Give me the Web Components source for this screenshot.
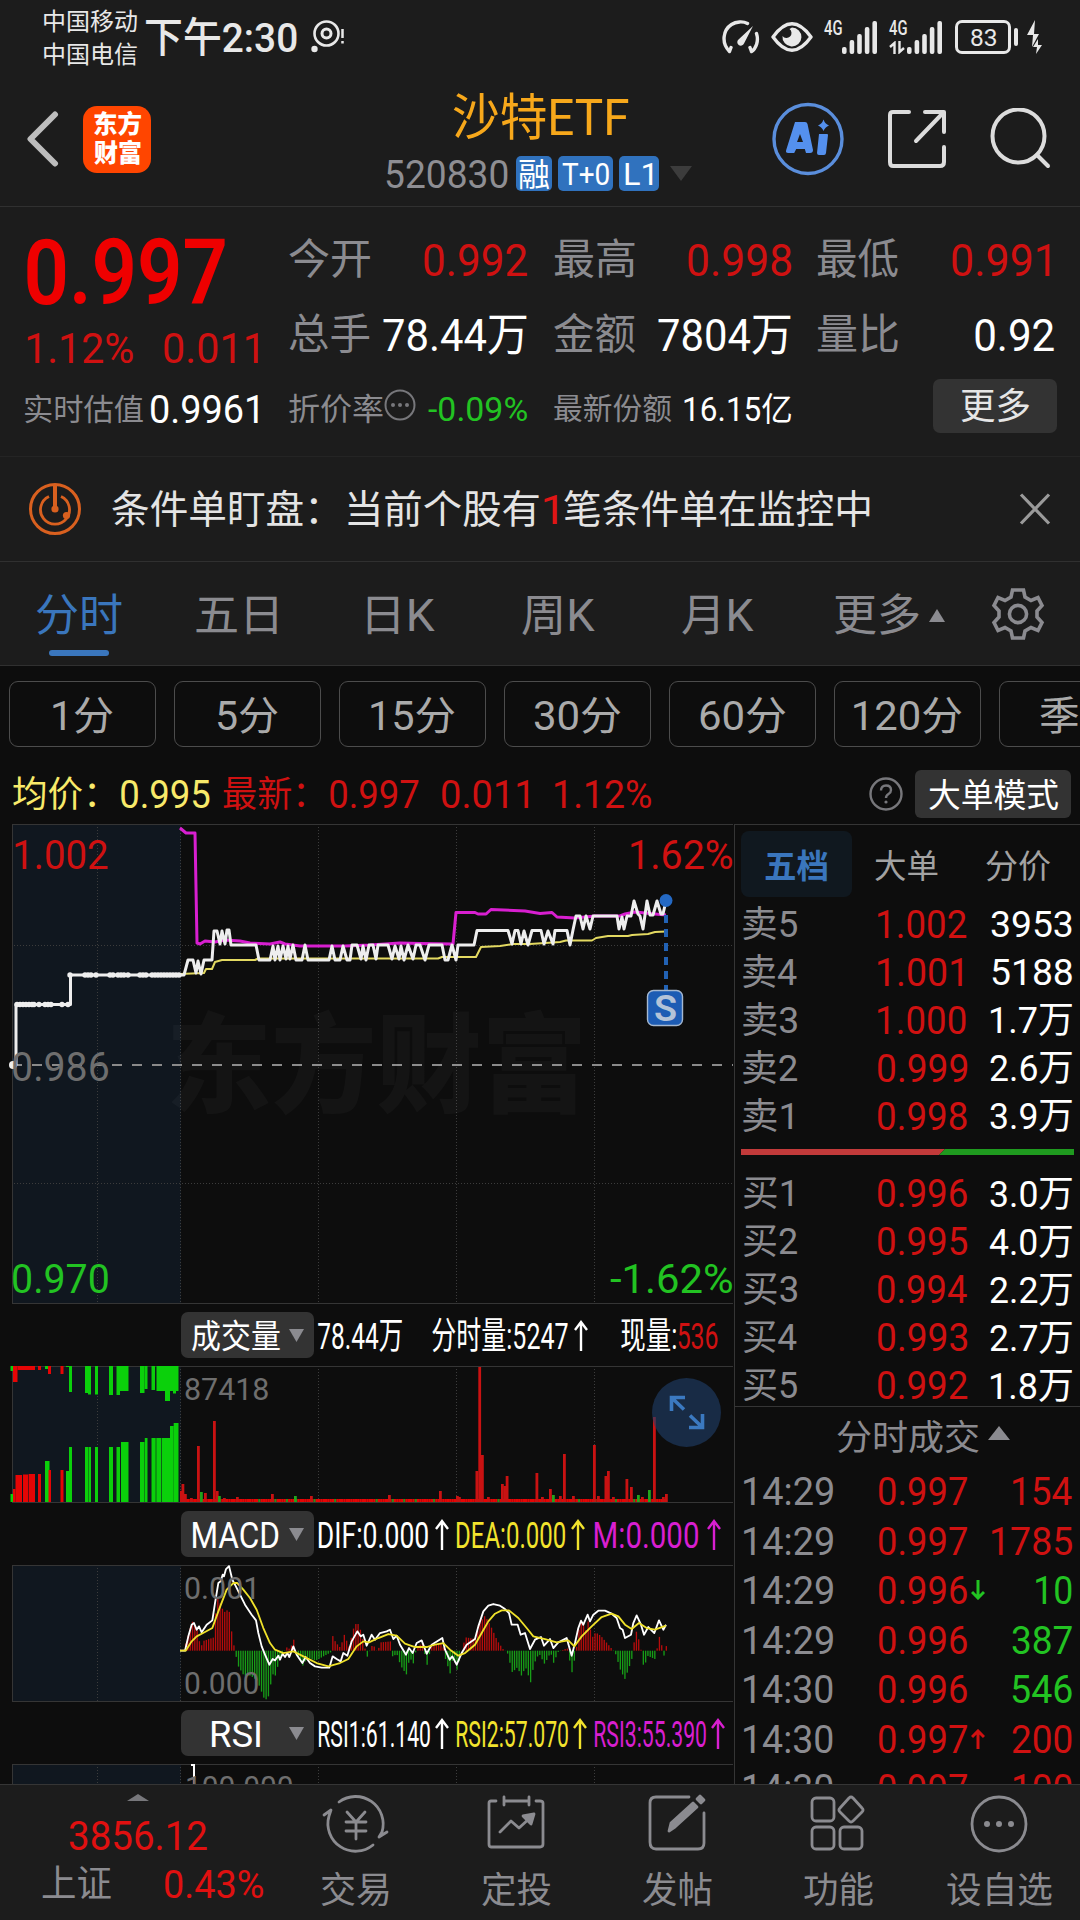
<!DOCTYPE html>
<html lang="zh-CN">
<head>
<meta charset="utf-8">
<title>沙特ETF 520830</title>
<style>
  html, body { margin: 0; background: #0d0d0d; }
</style>
</head>
<body>
<market-app></market-app>

<script>
const FONT = 'Roboto, "Noto Sans CJK SC", sans-serif';
const ctx = document.createElement("canvas").getContext("2d");

// Text whose ink fills exactly `w` pixels: <fit-text size="40" w="90">0.995</fit-text>
class FitText extends HTMLElement {
  constructor() {
    super();
    this.shadowDOM = this.attachShadow({ mode: "open" });
  }
  connectedCallback() {
    this.render();
  }

  render() {
    const size = this.getAttribute("size");
    const width = Number(this.getAttribute("w"));
    const weight = this.getAttribute("weight") || 400;
    const color = this.getAttribute("color") || "inherit";
    ctx.font = `${weight} ${size}px ${FONT}`;
    const box = ctx.measureText(this.textContent.trim());
    const ink = box.actualBoundingBoxLeft + box.actualBoundingBoxRight;
    const scale = width / ink;
    this.shadowDOM.innerHTML = `
    <style>
    :host {
        display: block;
        flex: none;
        width: ${width}px;
        height: ${size}px;
        font: ${weight} ${size}px/${size}px ${FONT};
        color: ${color};
    }
    span {
        display: block;
        width: max-content;
        white-space: nowrap;
        transform-origin: 0 50%;
        transform: translate(${box.actualBoundingBoxLeft * scale}px, 1px) scaleX(${scale});
    }
    </style><span><slot></slot></span>`;
  }
}
customElements.define("fit-text", FitText);

class View extends HTMLElement {
  constructor() {
    super();
    this.shadowDOM = this.attachShadow({ mode: "open" });
  }
  connectedCallback() {
    this.shadowDOM.innerHTML = `
    <style>
    :host { display: block; box-sizing: border-box; }
    * { box-sizing: border-box; }
    svg { display: block; flex: none; }
    ${this.styles()}
    </style>
    ${this.markup()}`;
  }
  styles() { return ""; }
  markup() { return ""; }
}

class StatusBar extends View {
  styles() {
    return `
    :host { display: flex; align-items: center; height: 74px; padding-left: 44px; color: #e8e8e8; }
    .carriers { display: flex; flex-direction: column; gap: 9px; }
    .signal { display: flex; }
    .battery { display: flex; align-items: center; justify-content: center; width: 56px; height: 34px; border: 3px solid #e8e8e8; border-radius: 7px; }
    .nub { width: 4px; height: 18px; border-radius: 2px; background: #e8e8e8; margin-left: 3px; }
    `;
  }
  bars() {
    return [[0, 7], [7.6, 14], [15.2, 20], [22.8, 27], [30.4, 33]]
      .map(([x, h]) => `<rect x="${x}" y="${33 - h}" width="4.6" height="${h}" rx="2"/>`).join("");
  }
  markup() {
    return `
    <div class="carriers">
      <fit-text size="24" w="93">中国移动</fit-text>
      <fit-text size="24" w="93">中国电信</fit-text>
    </div>
    <fit-text size="41" w="151" weight="500" style="margin-left:9px">下午2:30</fit-text>
    <svg width="36" height="36" viewBox="0 0 36 36" style="margin-left:13px" fill="none" stroke="#e8e8e8">
      <circle cx="16.500" cy="14.500" r="12" stroke-width="2.600"/><circle cx="16.500" cy="14.500" r="4.500" stroke-width="3"/>
      <circle cx="4.500" cy="30" r="3.200" fill="#e8e8e8" stroke="none"/>
      <path d="M32.500 10v9M32.500 22v2.500" stroke-width="2.500"/>
    </svg>
    <svg width="38" height="34" viewBox="0 0 38 34" style="margin-left:376px" fill="none" stroke="#e8e8e8" stroke-width="3.400" stroke-linecap="round">
      <path d="M7.500 31.500C-1 23 1 10 9.500 4.500C14 1.500 21 1 25.500 3.500M29.500 31.500C34 28.500 37 21 34.500 13.500M7.500 31.500l1.500-4M29.500 31.500l-1.500-4"/>
      <path d="M31 6L22 23.500A3.500 3.500 0 1 1 16.500 19.500Z" fill="#e8e8e8" stroke="none"/>
    </svg>
    <svg width="42" height="30" viewBox="0 0 42 30" style="margin-left:11px">
      <path d="M2 15Q21-11.500 40 15Q21 41.500 2 15Z" fill="none" stroke="#e8e8e8" stroke-width="3.400" stroke-linejoin="round"/>
      <path d="M21 5.500a9.500 9.500 0 1 1-9.500 8.500a5 5 0 1 0 7-7z" fill="#e8e8e8"/>
    </svg>
    <div class="signal" style="margin-left:11px">
      <fit-text size="20" w="18" weight="500" style="margin-top:-4px">4G</fit-text>
      <svg width="35" height="33" viewBox="0 0 35 33" fill="#e8e8e8">${this.bars()}</svg>
    </div>
    <div class="signal" style="margin-left:12px">
      <div>
        <fit-text size="20" w="18" weight="500" style="margin-top:-4px">4G</fit-text>
        <svg width="18" height="13" viewBox="0 0 18 13" fill="none" stroke="#e8e8e8" stroke-width="2.400" style="margin-top:4px"><path d="M1 6L5.500 2v11M10.500 0v11L15 7"/></svg>
      </div>
      <svg width="35" height="33" viewBox="0 0 35 33" fill="#e8e8e8">${this.bars()}</svg>
    </div>
    <div class="battery" style="margin-left:13px"><fit-text size="24" w="25">83</fit-text></div>
    <i class="nub"></i>
    <svg width="16" height="34" viewBox="0 0 16 34" style="margin-left:9px" fill="#e8e8e8">
      <path d="M8 0L0 15h6l-1 12 7-13H7zM11 19l-5 8h4l-1 7 6-9h-4z"/>
    </svg>`;
  }
}
customElements.define("status-bar", StatusBar);

class StockHeader extends View {
  styles() {
    return `
    :host { display: flex; align-items: center; height: 133px; padding-left: 27px; border-bottom: 1px solid #303030; }
    .logo { display: flex; flex-direction: column; align-items: center; gap: 4px; width: 68px; height: 67px; padding-top: 5px; margin: -2px 0 0 24px; border-radius: 14px; background: #ff4500; color: #fff; }
    .title { width: 306px; margin-left: 235px; padding-top: 3px; }
    .code { display: flex; align-items: center; height: 36px; margin-top: 14px; }
    .tag { display: flex; align-items: center; justify-content: center; height: 35px; border-radius: 5px; background: #3072be; color: #fff; margin-right: 6px; }
    `;
  }
  markup() {
    return `
    <svg width="32" height="56" viewBox="0 0 32 56" style="margin-top:-2px" fill="none" stroke="#bdbdbd" stroke-width="6" stroke-linecap="round" stroke-linejoin="round"><path d="M28 3.500L3.500 28L28 52.500"/></svg>
    <div class="logo">
      <fit-text size="25" w="47" weight="900">东方</fit-text>
      <fit-text size="25" w="47" weight="900">财富</fit-text>
    </div>
    <div class="title">
      <fit-text size="50" w="176" color="#f7a81b" style="margin-left:67px">沙特ETF</fit-text>
      <div class="code">
        <fit-text size="38" w="122" color="#8e8e93" style="margin-right:8px">520830</fit-text>
        <div class="tag" style="width:36px"><fit-text size="32" w="30">融</fit-text></div>
        <div class="tag" style="width:55px"><fit-text size="31" w="47">T+0</fit-text></div>
        <div class="tag" style="width:40px;margin-right:11px"><fit-text size="31" w="28">L1</fit-text></div>
        <svg width="22" height="15" viewBox="0 0 22 15"><path d="M0 0h22L11 15z" fill="#3c3c3c"/></svg>
      </div>
    </div>
    <svg width="72" height="74" viewBox="0 0 72 74" style="margin:-2px 0 0 80px">
      <ellipse cx="36" cy="37" rx="34" ry="34.500" fill="none" stroke="#5a8edc" stroke-width="3.400"/>
      <path d="M23 20h10q2 0 2.500 2l5.500 26q0 3-3 3h-4l-1.200-4h-8.600l-2 4h-6q-3 0-2-3zM28 32l-3 8h6z" fill="#5490ee" fill-rule="evenodd"/>
      <path d="M47 32h8q1 0 1 1l-2 18q-.3 2-2 2h-5q-2 0-2-2zM51.500 17.500q1.500 4.500 5.500 6q-4 1.500-5.500 5.500q-1.500-4-5.500-5.500q4-1.500 5.500-6z" fill="#5490ee"/>
    </svg>
    <svg width="58" height="60" viewBox="0 0 58 60" style="margin:-2px 0 0 44px" fill="none" stroke="#dcdcdc" stroke-width="4" stroke-linecap="round" stroke-linejoin="round">
      <path d="M21 3H5Q2 3 2 6V53Q2 57 5 57H52Q56 57 56 53V38M37 3H56V23M54 5L28 32"/>
    </svg>
    <svg width="62" height="62" viewBox="0 0 62 62" style="margin:-2px 0 0 44px" fill="none" stroke="#dcdcdc" stroke-width="4" stroke-linecap="round">
      <ellipse cx="28.500" cy="28" rx="26" ry="26.500"/><path d="M47 47L58 58"/>
    </svg>`;
  }
}
customElements.define("stock-header", StockHeader);

class QuotePanel extends View {
  styles() {
    return `
    :host { display: flex; height: 250px; border-bottom: 1px solid #242424; color: #fff; }
    .last { width: 289px; padding: 20px 0 0 27px; }
    .row { display: flex; align-items: center; }
    .grid { display: grid; grid-template-columns: 238px 237px 237px; grid-template-rows: 74px 76px 72px; column-gap: 26.500px; padding-top: 15px; }
    .cell { display: flex; align-items: center; justify-content: space-between; }
    .more { display: flex; align-items: center; justify-content: center; width: 124px; height: 54px; margin: -4px -3px 0 auto; border-radius: 7px; background: #333; color: #e6e6e6; }
    `;
  }
  cell(label, value, width, color = "inherit", pad = 0) {
    return `<div class="cell" style="padding-right:${pad}px">
      <fit-text size="42" w="81" color="#8b8b90">${label}</fit-text>
      <fit-text size="45" w="${width}" color="${color}">${value}</fit-text></div>`;
  }
  markup() {
    const red = "#cf1111";
    return `
    <div class="last">
      <div class="row" style="height:92px"><fit-text size="90" w="198" weight="600" color="#ef0000">0.997</fit-text></div>
      <div class="row" style="height:57px">
        <fit-text size="43" w="106" color="${red}">1.12%</fit-text>
        <fit-text size="43" w="94" color="${red}" style="margin-left:31px">0.011</fit-text>
      </div>
      <div class="row" style="height:66px;margin-left:-2px">
        <fit-text size="30" w="118" color="#8b8b90">实时估值</fit-text>
        <fit-text size="38" w="107" style="margin-left:8px">0.9961</fit-text>
      </div>
    </div>
    <div class="grid">
      ${this.cell("今开", "0.992", 103, red)}
      ${this.cell("最高", "0.998", 103, red)}
      ${this.cell("最低", "0.991", 98, red, 4)}
      ${this.cell("总手", "78.44万", 144)}
      ${this.cell("金额", "7804万", 133)}
      ${this.cell("量比", "0.92", 79)}
      <div class="row">
        <fit-text size="31" w="94" color="#8b8b90">折价率</fit-text>
        <svg width="32" height="32" viewBox="0 0 32 32" style="margin:-7px 0 0 1px" fill="#77777b">
          <circle cx="16" cy="16" r="14.500" fill="none" stroke="#77777b" stroke-width="2"/>
          <circle cx="9" cy="16" r="2"/><circle cx="16" cy="16" r="2"/><circle cx="23" cy="16" r="2"/>
        </svg>
        <fit-text size="33" w="99" color="#22c322" style="margin-left:12px">-0.09%</fit-text>
      </div>
      <div class="cell">
        <fit-text size="30" w="118" color="#8b8b90">最新份额</fit-text>
        <fit-text size="33" w="107">16.15亿</fit-text>
      </div>
      <div class="row"><div class="more"><fit-text size="36" w="68">更多</fit-text></div></div>
    </div>`;
  }
}
customElements.define("quote-panel", QuotePanel);

class NoticeBar extends View {
  styles() {
    return `:host { display: flex; align-items: center; height: 105px; padding-left: 28px; border-bottom: 1px solid #303030; color: #e4e4e4; }`;
  }
  markup() {
    return `
    <svg width="54" height="54" viewBox="0 0 54 54" fill="none" stroke="#d9601f" stroke-width="3">
      <circle cx="27" cy="27" r="24.500"/>
      <path d="M21 14.500A14.500 14.500 0 1 0 33 14.500" stroke-width="2.800"/><path d="M27 3V27" stroke-width="4"/>
      <circle cx="27" cy="27" r="3.600" fill="#d9601f" stroke="none"/><circle cx="38.500" cy="33.500" r="3.600" fill="#d9601f" stroke="none"/>
    </svg>
    <fit-text size="39" w="205" style="margin-left:30px">条件单盯盘：</fit-text>
    <fit-text size="39" w="191" style="margin-left:31px">当前个股有</fit-text>
    <fit-text size="41" w="13" color="#e01515" style="margin-left:5px">1</fit-text>
    <fit-text size="39" w="306" style="margin-left:7px">笔条件单在监控中</fit-text>
    <svg width="32" height="32" viewBox="0 0 32 32" style="margin-left:149px" stroke="#9a9a9a" stroke-width="3.200"><path d="M2 1.500L30 30.500M30 1.500L2 30.500"/></svg>`;
  }
}
customElements.define("notice-bar", NoticeBar);

class PeriodTabs extends View {
  styles() {
    return `
    :host { display: flex; align-items: center; height: 104px; padding: 3px 0 0 36px; border-bottom: 1px solid #303030; color: #8b8b90; }
    .active { position: relative; color: #3a76bd; }
    .active::after { content: ""; position: absolute; left: 13px; bottom: -19px; width: 60px; height: 6px; border-radius: 3px; background: #3a76bd; }
    `;
  }
  markup() {
    return `
    <div class="active"><fit-text size="44" w="86">分时</fit-text></div>
    <fit-text size="44" w="81" style="margin-left:74px">五日</fit-text>
    <fit-text size="44" w="68" style="margin-left:90px">日K</fit-text>
    <fit-text size="44" w="73" style="margin-left:87px">周K</fit-text>
    <fit-text size="44" w="72" style="margin-left:87px">月K</fit-text>
    <fit-text size="44" w="84" style="margin-left:81px">更多</fit-text>
    <svg width="16" height="13" viewBox="0 0 16 13" style="margin-left:10px"><path d="M8 0l8 13H0z" fill="#8b8b90"/></svg>
    <svg width="54" height="54" viewBox="-27 -27 54 54" style="margin:-3px 0 0 46px" fill="none" stroke="#8b8b90" stroke-width="3.600">
      <path d="M-5.500-24H5.500L7-17L13-13.500L20-16.500L24-8.500L19-3V3L24 8.500L20 16.500L13 13.500L7 17L5.500 24H-5.500L-7 17L-13 13.500L-20 16.500L-24 8.500L-19 3V-3L-24-8.500L-20-16.500L-13-13.500L-7-17Z"/>
      <circle r="8.600"/>
    </svg>`;
  }
}
customElements.define("period-tabs", PeriodTabs);

class MinuteChips extends View {
  styles() {
    return `
    :host { display: flex; gap: 18px; height: 88px; padding: 15px 0 0 9px; overflow: hidden; color: #aaa; }
    .chip { display: flex; flex: none; align-items: center; justify-content: center; width: 147px; height: 66px; padding-top: 3px; border: 1px solid #4c4c4c; border-radius: 9px; }
    `;
  }
  markup() {
    return [["1分", 60], ["5分", 60], ["15分", 84], ["30分", 87], ["60分", 86], ["120分", 108], ["季K", 66]]
      .map(([text, w]) => `<div class="chip"><fit-text size="40" w="${w}">${text}</fit-text></div>`).join("");
  }
}
customElements.define("minute-chips", MinuteChips);

class PriceLegend extends View {
  styles() {
    return `
    :host { display: flex; align-items: center; height: 71px; padding: 9px 9px 0 13px; color: #cf1111; }
    .mode { display: flex; align-items: center; justify-content: center; width: 156px; height: 48px; margin-left: 12px; border-radius: 6px; background: #333; color: #fff; }
    `;
  }
  markup() {
    return `
    <fit-text size="36" w="82" color="#f8e96a">均价：</fit-text>
    <fit-text size="39" w="89" color="#f8e96a" style="margin-left:26px">0.995</fit-text>
    <fit-text size="36" w="81" style="margin-left:13px">最新：</fit-text>
    <fit-text size="39" w="89" style="margin-left:26px">0.997</fit-text>
    <fit-text size="39" w="86" style="margin-left:23px">0.011</fit-text>
    <fit-text size="39" w="96" style="margin-left:27px">1.12%</fit-text>
    <svg width="34" height="34" viewBox="0 0 34 34" style="margin-left:auto" fill="none" stroke="#77777b" stroke-width="2.400">
      <circle cx="17" cy="17" r="15.500"/><path d="M12 13.500Q12 8.500 17 8.500T22 13Q22 15.500 19.500 17Q17 18.500 17 21"/><circle cx="17" cy="25" r="1.600" fill="#77777b" stroke="none"/>
    </svg>
    <div class="mode"><fit-text size="33" w="129">大单模式</fit-text></div>`;
  }
}
customElements.define("price-legend", PriceLegend);

// Dark frame with the pre-market block and the dotted time lines, shared by all chart panes
function frame(height) {
  return `
  <rect x="13" y="0" width="168" height="${height}" fill="#10171f"/>
  <path d="M97.500 0V${height}M180.500 0V${height}M318.500 0V${height}M456.500 0V${height}M594.500 0V${height}" stroke="#3c3c3c" stroke-dasharray="1 2"/>
  <path d="M12.500 0V${height}M12 .5H733M12 ${height - 0.5}H733" stroke="#353535" fill="none"/>`;
}

class TrendChart extends View {
  styles() {
    return `
    :host { position: relative; height: 480px; }
    fit-text { position: absolute; }
    `;
  }
  markup() {
    const dots = [17, 20, 23, 26, 29, 32, 34, 39, 45, 48, 51, 62, 68, 70, 85, 88, 91, 96, 110, 113, 118, 121, 124, 128, 140, 143, 146, 152, 155, 158, 161, 164, 167, 170, 173, 176, 179]
      .map(x => `<circle cx="${x}" cy="${x < 70 ? 180.5 : 151}" r="2.700"/>`).join("");
    return `
    <svg width="735" height="480" viewBox="0 0 735 480" fill="none">
      <rect x="13" y="0" width="168" height="480" fill="#10171f"/>
      <path d="M97.500 0V480M180.500 0V480M318.500 0V480M456.500 0V480M594.500 0V480M14 121.500H733M14 359.500H733" stroke="#3c3c3c" stroke-dasharray="1 2"/>
      <path d="M12.500 0V480M12 .5H733M12 479.500H733" stroke="#353535"/>
      <path d="M12 241H733" stroke="#8a8a8a" stroke-width="2" stroke-dasharray="10 10"/>
      <g transform="translate(0 -824)" stroke-linejoin="round">
        <path stroke="#e3d961" stroke-width="2" d="M180 974L204 973L206 969L212 969L215 962L222 960L255 960L258 958.500L438 958.500L442 957L476 957L481 947L500 946L514 944L530 944L560 942L566 940.500L592 940.500L596 938L608 936L628 936L632 935L648 934L655 932L666 931.500"/>
        <path stroke="#d81fd0" stroke-width="3" d="M180 828L186 833L195 833L197 943L200 944L205 941L215 942L225 940L240 941L250 943L270 944L280 942L285 944L300 946L345 946L370 945L400 943L420 943.500L453 944L456 912.500L475 912.500L478 914L486 914L491 909.500L525 911L540 913.500L552 912.500L557 917L575 918L595 916L620 916L625 914L635 912L655 914L666 915"/>
        <path stroke="#eee" stroke-width="3" d="M13 1065H16V1004.500H70.500V975H184L188 960H193L196 973L198 961L201 974L204 960H212L214 931H217L220 944L222 931L225 944L227 930H229L231 945H256L259 960H270L273 946L275 960L278 946L280 960L283 946L286 959L288 946L290 959L293 945L296 960H302L305 945L308 960H329L332 946L335 960H340L343 946L347 960H350L352 945H357L361 959L363 946L366 960L369 945H373L376 959L378 945H388L392 959L395 946L399 959L401 946L404 960L408 945L413 959L416 945H420L425 960L429 945H442L445 960H448L452 945L456 960L458 945H474L477 930.500H508L512 944L515 930.500H518L521 944L524 931L528 945L532 930.500H541L544 944L548 931L553 944L555 930.500H567L570 945L573 930L576 916H580L583 929L586 916L590 929L593 916H617L619 929L622 917L624 929L627 916H631L634 901L638 914L640 916L643 929L647 901L650 915H653L657 901L661 914H663L666 901"/>
      </g>
      <circle cx="13" cy="241" r="4" fill="#eee"/>
      <g fill="#eee">${dots}</g>
      <path d="M666 91V166" stroke="#2262b4" stroke-width="4" stroke-dasharray="8 6"/>
      <circle cx="666" cy="76.500" r="6.500" fill="#2469c4"/>
      <rect x="647.500" y="166.500" width="35" height="35" rx="6" fill="#1d5cb4" stroke="#a5b8d0" stroke-width="1.400"/>
    </svg>
    <fit-text size="108" w="409" weight="900" color="rgba(255,255,255,.03)" style="left:171px;top:188px">东方财富</fit-text>
    <fit-text size="36" w="21" weight="600" color="#b4c3d8" style="left:654.5px;top:166px">S</fit-text>
    <fit-text size="40.500" w="93" color="#cf1111" style="left:15px;top:10px">1.002</fit-text>
    <fit-text size="40.500" w="95" color="#6e6e6e" style="left:13px;top:222px">0.986</fit-text>
    <fit-text size="40.500" w="95" color="#22c322" style="left:13px;top:434px">0.970</fit-text>
    <fit-text size="40.500" w="101" color="#cf1111" style="left:631px;top:10px">1.62%</fit-text>
    <fit-text size="40.500" w="122" color="#22c322" style="left:610px;top:434px">-1.62%</fit-text>`;
  }
}
customElements.define("trend-chart", TrendChart);

// Indicator picker followed by its readings
class IndicatorRow extends View {
  styles() {
    return `
    :host { display: flex; align-items: center; height: 62px; padding-left: 181px; color: #fff; }
    .pick { display: flex; flex: none; align-items: center; justify-content: center; position: relative; width: 133px; height: 46px; padding-right: 24px; margin-right: 4px; border-radius: 7px; background: #333; }
    .pick svg { position: absolute; left: 108px; top: 17px; }
    `;
  }
  markup() {
    const [size, width] = this.getAttribute("box").split(" ");
    return `
    <div class="pick">
      <fit-text size="${size}" w="${width}">${this.getAttribute("name")}</fit-text>
      <svg width="15" height="13" viewBox="0 0 15 13"><path d="M0 0h15L7.500 13z" fill="#8b8b90"/></svg>
    </div>
    <slot></slot>`;
  }
}
customElements.define("indicator-row", IndicatorRow);

class UpArrow extends View {
  styles() { return `:host { flex: none; width: 14px; height: 32px; }`; }
  markup() {
    return `<svg width="14" height="32" viewBox="0 0 14 32" fill="none" stroke="currentColor" stroke-width="2.400"><path d="M7 32V3M1 11L7 3L13 11"/></svg>`;
  }
}
customElements.define("up-arrow", UpArrow);

class VolumeChart extends View {
  styles() {
    return `
    :host { position: relative; height: 137px; }
    fit-text { position: absolute; left: 185px; top: 7px; }
    .expand { position: absolute; left: 652px; top: 12px; }
    `;
  }
  bars() {
    const green = "#0bd00b", red = "#e60505";
    const rect = (x, w, y, h, c) => `<rect x="${x}" y="${y}" width="${w}" height="${h}" fill="${c}"/>`;
    let out = "";
    // auction: unmatched volume hangs from the top, matched volume stands on the bottom
    [[10.5, 13, 5, green], [13, 17.5, 16, red], [17.5, 35, 4, red], [38, 41, 4, red], [45, 48, 3, green], [48, 51, 8, red], [60.5, 63.5, 8, red],
     [66, 69, 1, green], [69, 72, 26, green], [85, 88, 27, green], [88, 91, 28.5, green], [95, 98, 28.5, green], [109, 113, 29, green], [116.5, 120, 29, green], [120, 128.5, 25, green],
     [140, 144.5, 27, green], [144.5, 147.5, 23, green], [151.5, 155, 24, green], [156.5, 165, 25, green], [165, 170, 35, green], [170, 173, 25, green], [173, 176, 27.5, green], [176, 178.5, 25, green]]
      .forEach(([a, b, h, c]) => { out += rect(a, b - a, 0, h, c); });
    [[10.5, 13, 8, green], [13, 15.5, 13, red], [15.5, 22, 27, red], [23, 28, 27.5, red], [28.6, 35, 28, red], [38, 41, 28, red], [45, 49.5, 41, green], [48.5, 51, 32, red], [60.5, 63.5, 32, red],
     [66, 69, 31, green], [69, 72, 55, green], [85, 88, 55, green], [88.4, 91, 55, green], [95, 98, 55, green], [109, 113, 55, green], [116.5, 120, 55, green], [121, 128.5, 60, green],
     [140, 144.5, 60, green], [144.8, 147.5, 64, green], [151.5, 155.7, 64, green], [156.3, 161, 64, green], [161.6, 170, 64, green], [170, 173.7, 76, green], [173.7, 178.5, 79, green]]
      .forEach(([a, b, h, c]) => { out += rect(a, b - a, 136 - h, h, c); });
    // minute volume
    const dark = "#c91212", dim = "#318a1a";
    for (let i = 0; i < 211; i++) {
      const x = 180 + i * 2.3;
      out += rect(x.toFixed(1), 2.4, 133, 3, [34, 41, 46, 50, 58, 67, 85, 92, 97, 102, 110, 130, 138].some(k => i % 139 === k) ? dim : red);
    }
    [[180, 11], [181.5, 18], [184, 8], [190, 4], [197, 56], [200, 10, 1], [204, 9], [213, 81], [215.8, 11], [218, 6, 1], [223, 4], [236, 5], [271, 8], [294, 6, 1], [310, 6],
     [388, 7], [439, 11], [456, 6], [458, 5], [475.5, 31], [478.3, 135], [481, 47], [487, 5], [501, 18], [503.5, 16], [505.7, 26], [535.5, 29], [541, 5], [549, 13], [552, 7, 1], [559, 6],
     [563, 48], [572, 6], [593, 57], [597, 6], [604.5, 26], [607, 31], [612, 5], [625.5, 23], [630, 15], [637, 7, 1], [641, 5], [648, 12, 1], [653, 85], [662, 5], [665, 8]]
      .forEach(([x, h, g]) => { out += rect(x, 2.8, 136 - h, h, g ? "#22a51c" : dark); });
    return out;
  }
  markup() {
    return `
    <svg width="735" height="137" viewBox="0 0 735 137">${frame(137)}${this.bars()}</svg>
    <fit-text size="31" w="83" color="#6e6e6e">87418</fit-text>
    <svg class="expand" width="70" height="70" viewBox="0 0 70 70" fill="none" stroke="#3b79c0" stroke-width="3.600">
      <circle cx="34.500" cy="34.500" r="34.500" fill="#20406b" fill-opacity=".6" stroke="none"/>
      <path d="M33 19.500H19.500V33M20 20L32 31.500M37 49.500H50.500V36M50 49L38 37.500"/>
    </svg>`;
  }
}
customElements.define("volume-chart", VolumeChart);

class MacdChart extends View {
  styles() {
    return `
    :host { position: relative; height: 137px; }
    fit-text { position: absolute; left: 185px; }
    `;
  }
  histogram() {
    const left = [[545, 0], [550, 5], [575, 88], [590, 60], [600, 10], [610, 30], [640, 40], [648, 165], [655, 150], [670, 115], [685, 125], [695, 40], [703, 0], [712, -45], [730, -75], [750, -75], [770, -90], [793, -150], [805, -135], [815, -70], [825, -75], [835, -30], [845, -12], [858, 10], [868, 5], [880, 35], [888, -10], [907, -45], [920, -20], [945, -30], [990, -5], [996, 45], [1005, 25], [1020, 8], [1030, 50], [1045, 12], [1062, 80], [1075, 80], [1090, 20], [1098, -15]];
    const right = [[8, -22], [15, 15], [28, 12], [35, -5], [45, 25], [75, 28], [82, -25], [92, -5], [105, -45], [123, -72], [132, -20], [143, -38], [152, 5], [170, 25], [185, -45], [195, 10], [230, 25], [238, -20], [254, -70], [262, -20], [275, -60], [290, 10], [300, 40], [330, 35], [343, 85], [358, 105], [375, 75], [395, 30], [412, 5], [425, -5], [440, -65], [455, -50], [467, -75], [480, -50], [495, -95], [505, -40], [520, -8], [537, -40], [555, -5], [565, -40], [575, -5], [605, 8], [619, -65], [630, -10], [640, 65], [648, 95], [660, 60], [668, 90], [680, 40], [690, 55], [705, 45], [735, 10], [750, -10], [765, -60], [778, -85], [792, -45], [800, -20], [806, 30], [813, 60], [825, 10], [835, -55], [845, -15], [868, -25], [882, 45], [895, -15], [903, 18]];
    const points = left.concat(right.map(([x, v]) => [x + 1095, v]));
    let out = "", k = 0;
    for (let x = 548; x < 1998; x += 6.9) {
      while (points[k + 1][0] < x) k++;
      const [x0, v0] = points[k], [x1, v1] = points[k + 1];
      const v = v0 + (v1 - v0) * (x - x0) / (x1 - x0);
      out += `<rect x="${x.toFixed(1)}" y="${(v > 0 ? 1053 - v : 1053).toFixed(1)}" width="4" height="${Math.abs(v).toFixed(1)}" fill="${v > 0 ? "#b80c0c" : "#179d17"}"/>`;
    }
    return out;
  }
  markup() {
    return `
    <svg width="735" height="137" viewBox="0 0 735 137">
      ${frame(137)}
      <g transform="translate(0 -265.300) scale(.33333)" fill="none" stroke-width="5.500" stroke-linejoin="round">
        ${this.histogram()}
        <path stroke="#fff" d="M540 1053H555L565 1010L575 975L582 970L590 990L597 980L605 998L620 975L637 962L645 910L655 850L662 845L668 825L672 830L678 808L687 799L697 840L705 855L720 885L735 915L755 945L768 962L775 1000L785 1040L795 1065L808 1095L818 1078L825 1082L835 1068L840 1080L848 1062L855 1072L862 1060L868 1072L880 1040L890 1065L907 1090L917 1072L930 1090L945 1100L965 1104H988L998 1070L1010 1078L1022 1085L1030 1060L1042 1068L1055 1025L1072 995L1082 1010L1090 1005L1100 1038L1115 1005L1125 1020L1140 1000L1160 995L1170 990L1180 1018L1190 1008L1200 1035L1218 1065L1227 1045L1238 1060L1250 1030L1265 1022L1280 1062L1295 1035L1327 1015L1335 1050L1349 1080L1357 1070L1370 1095L1385 1060L1400 1035L1425 1018L1435 980L1450 935L1465 918L1480 913L1500 918L1515 928L1527 940L1535 975H1553L1562 1005L1575 1000L1590 1048L1605 1020L1623 1012L1632 1038L1650 1018L1660 1045L1675 1028L1700 1015L1715 1068L1725 1030L1735 985L1743 963L1750 975L1763 945L1770 965L1780 945L1795 933H1815L1835 942L1850 955L1860 985L1868 990L1875 1015L1893 1005L1900 970L1910 947L1923 975L1932 1005L1945 982L1963 1000L1977 962L1990 990L1998 975"/>
        <path stroke="#efe12a" d="M540 1053H557L575 1025L590 1010L615 997L637 985L655 935L680 870L700 850H712L730 870L750 895L770 930L790 985L810 1030L825 1050L850 1060L880 1055L910 1070L950 1090L985 1100L1020 1090L1045 1078L1070 1040L1090 1025L1107 1028L1135 1015L1165 1003L1190 1008L1215 1032L1245 1042H1280L1305 1035L1330 1030L1350 1050L1375 1068L1395 1060L1425 1035L1445 1000L1465 965L1485 942L1505 932H1527L1555 955L1580 985L1600 1010L1635 1018L1670 1028L1705 1022L1723 1040L1745 1010L1775 980L1805 952L1835 942L1855 950L1875 975L1895 988L1917 970L1940 985L1965 990L1998 978"/>
      </g>
    </svg>
    <fit-text size="31" w="70" color="#6e6e6e" style="top:7px">0.001</fit-text>
    <fit-text size="31" w="73" color="#6e6e6e" style="top:102px">0.000</fit-text>`;
  }
}
customElements.define("macd-chart", MacdChart);

class RsiChart extends View {
  styles() {
    return `
    :host { position: relative; height: 20px; overflow: hidden; }
    fit-text { position: absolute; left: 187px; top: 7px; }
    `;
  }
  markup() {
    return `
    <svg width="735" height="137" viewBox="0 0 735 137">${frame(137)}<path d="M191 1H194V40" stroke="#fff" stroke-width="2" fill="none"/></svg>
    <fit-text size="31" w="105" color="#6e6e6e">100.000</fit-text>`;
  }
}
customElements.define("rsi-chart", RsiChart);

class ChartColumn extends View {
  styles() {
    return `
    :host { width: 734px; flex: none; }
    .y { color: #f2e32d; }
    .m { color: #d81fd0; }
    up-arrow { margin: 0 8px 0 7px; }
    `;
  }
  markup() {
    return `
    <trend-chart></trend-chart>
    <indicator-row name="成交量" box="33 88">
      <fit-text size="37" w="84">78.44万</fit-text>
      <fit-text size="37" w="136" style="margin-left:30px">分时量:5247</fit-text>
      <up-arrow style="margin:0 33px 0 6px"></up-arrow>
      <fit-text size="37" w="55">现量:</fit-text>
      <fit-text size="37" w="40" color="#cf1111" style="margin-left:2px">536</fit-text>
    </indicator-row>
    <volume-chart></volume-chart>
    <indicator-row name="MACD" box="37 86">
      <fit-text size="37" w="109" style="margin-left:1px">DIF:0.000</fit-text><up-arrow></up-arrow>
      <fit-text class="y" size="37" w="108">DEA:0.000</fit-text><up-arrow class="y" style="margin:0 10px 0 6px"></up-arrow>
      <fit-text class="m" size="37" w="103">M:0.000</fit-text><up-arrow class="m" style="margin-left:9px"></up-arrow>
    </indicator-row>
    <macd-chart></macd-chart>
    <indicator-row name="RSI" box="37 48">
      <fit-text size="37" w="111" style="margin-left:1px">RSI1:61.140</fit-text><up-arrow style="margin:0 8px 0 5px"></up-arrow>
      <fit-text class="y" size="37" w="111">RSI2:57.070</fit-text><up-arrow class="y" style="margin:0 8px 0 5px"></up-arrow>
      <fit-text class="m" size="37" w="111">RSI3:55.390</fit-text><up-arrow class="m" style="margin-left:5px"></up-arrow>
    </indicator-row>
    <rsi-chart></rsi-chart>`;
  }
}
customElements.define("chart-column", ChartColumn);

class OrderBook extends View {
  styles() {
    return `
    :host { flex: 1; height: 960px; overflow: hidden; border-left: 1px solid #353535; border-top: 1px solid #353535; color: #fff; }
    .tabs { display: flex; align-items: center; height: 66px; margin: 6px 0 0 6px; color: #a2a2a2; }
    .on { display: flex; align-items: center; justify-content: center; width: 111px; height: 66px; padding-top: 3px; border-radius: 8px; background: #10181f; color: #3a76bd; }
    .row { display: grid; grid-template-columns: 135px 90px 1fr; align-items: center; height: 48.100px; padding: 0 8px 0 8px; }
    .row > :last-child { justify-self: end; }
    .price { display: flex; align-items: center; }
    .bar { display: block; margin: 9px 0 14px 6px; }
    .deals { display: flex; align-items: center; height: 60px; margin-top: -3px; padding: 2px 0 0 102px; border-top: 1px solid #353535; color: #8b8b90; }
    .tick { height: 49.500px; }
    .price svg { margin-left: 4px; }
    `;
  }
  level([name, price, pw, qty, qw]) {
    return `<div class="row">
      <fit-text size="36" w="${name.endsWith("1") ? 49 : 54}" color="#8b8b90">${name}</fit-text>
      <fit-text size="38" w="${pw}" color="#cf1111">${price}</fit-text>
      <fit-text size="37" w="${qw}">${qty}</fit-text>
    </div>`;
  }
  tick([time, price, qty, qw, color, arrow]) {
    const head = arrow === "up" ? "M7 20V2M1 8L7 2L13 8" : "M7 0V18M1 12L7 18L13 12";
    const svg = arrow ? `<svg width="14" height="20" viewBox="0 0 14 20" fill="none" stroke-width="3" stroke="${color}"><path d="${head}"/></svg>` : "";
    return `<div class="row tick">
      <fit-text size="38" w="89" color="#8b8b90" style="margin-left:1px">${time}</fit-text>
      <div class="price"><fit-text size="38" w="88" color="#cf1111" style="margin-left:1px">${price}</fit-text>${svg}</div>
      <fit-text size="38" w="${qw}" color="${color}">${qty}</fit-text>
    </div>`;
  }
  markup() {
    const sells = [["卖5", "1.002", 88, "3953", 81], ["卖4", "1.001", 84, "5188", 80], ["卖3", "1.000", 88, "1.7万", 81], ["卖2", "0.999", 89, "2.6万", 82], ["卖1", "0.998", 89, "3.9万", 82]];
    const buys = [["买1", "0.996", 89, "3.0万", 82], ["买2", "0.995", 89, "4.0万", 83], ["买3", "0.994", 89, "2.2万", 82], ["买4", "0.993", 89, "2.7万", 82], ["买5", "0.992", 89, "1.8万", 81]];
    const red = "#cf1111", green = "#22c322";
    const ticks = [["14:29", "0.997", "154", 59, red], ["14:29", "0.997", "1785", 80, red], ["14:29", "0.996", "10", 36, green, "down"], ["14:29", "0.996", "387", 60, green],
      ["14:30", "0.996", "546", 60, green], ["14:30", "0.997", "200", 60, red, "up"], ["14:30", "0.997", "100", 58, red]];
    return `
    <div class="tabs">
      <div class="on"><fit-text size="33" w="63" weight="600">五档</fit-text></div>
      <fit-text size="33" w="63" style="margin:2px 0 0 23px">大单</fit-text>
      <fit-text size="33" w="64" style="margin:2px 0 0 48px">分价</fit-text>
    </div>
    <div style="height:2.500px"></div>
    ${sells.map(this.level).join("")}
    <svg class="bar" width="333" height="6" viewBox="0 0 333 6"><path d="M0 0H204L198 6H0z" fill="#c23a3a"/><path d="M204 0H333V6H198z" fill="#1f9a1f"/></svg>
    ${buys.map(this.level).join("")}
    <div class="deals">
      <fit-text size="35" w="142">分时成交</fit-text>
      <svg width="22" height="14" viewBox="0 0 22 14" style="margin:-10px 0 0 9px"><path d="M11 0L22 14H0z" fill="#8b8b90"/></svg>
    </div>
    ${ticks.map(this.tick).join("")}`;
  }
}
customElements.define("order-book", OrderBook);

class BottomBar extends View {
  styles() {
    return `
    :host { display: grid; grid-template-columns: 275px repeat(5, 161px); height: 136px; border-top: 1px solid #353535; background: #1c1c1c; color: #8b8b90; }
    .index { display: flex; flex-direction: column; align-items: center; padding-top: 9px; color: #e01010; }
    .line { display: flex; gap: 54px; width: 221px; margin-left: 30px; }
    .item { display: flex; flex-direction: column; align-items: center; padding: 9px 1px 0 0; gap: 18px; }
    `;
  }
  item(label, width, icon) {
    return `<div class="item">
      <svg width="68" height="60" viewBox="0 0 68 60" fill="none" stroke="#8b8b90" stroke-width="2.800" stroke-linecap="round" stroke-linejoin="round">${icon}</svg>
      <fit-text size="36" w="${width}">${label}</fit-text></div>`;
  }
  markup() {
    return `
    <div class="index">
      <svg width="22" height="7" viewBox="0 0 22 7"><path d="M11 0L22 7H0z" fill="#77777b"/></svg>
      <fit-text size="41" w="138" style="margin-top:14px">3856.12</fit-text>
      <div class="line" style="margin-top:9px">
        <fit-text size="37" w="69" color="#8b8b90">上证</fit-text>
        <fit-text size="39" w="98">0.43%</fit-text>
      </div>
    </div>
    ${this.item("交易", 68, `<path d="M18 8A27.600 27.600 0 0 1 61 38L58 43L66 38M52 51A27.600 27.600 0 0 1 8 22L10 16L3 21"/>
      <path d="M26 18L35 28L44 18M25 28H45M25 37H45M35 28V45"/>`)}
    ${this.item("定投", 69, `<path d="M14 7H9Q7 7 7 9V50Q7 53 9 53H58Q61 53 61 50V9Q61 7 58 7H54M22 3V11M47 3V11M22 7H47M18 38L29 27L37 34L49 23"/>
      <path d="M41 22L52 20L49 30z" fill="#8b8b90"/>`)}
    ${this.item("发帖", 69, `<path d="M46 3H13Q7 3 7 9V48Q7 55 13 55H55Q61 55 61 49V19"/>
      <path d="M26 37L28 29L50 9L54 13L32 33zM54 5L57 2L61 6L58 9z" fill="#8b8b90"/>`)}
    ${this.item("功能", 69, `<rect x="8" y="4" width="22" height="23" rx="4"/><rect x="8" y="33" width="22" height="22" rx="4"/><rect x="36" y="33" width="22" height="22" rx="4"/>
      <path d="M45 4Q47 2 49 4L58 14Q60 16 58 18L49 27Q47 29 45 27L36 18Q34 16 36 14z"/>`)}
    ${this.item("设自选", 105, `<circle cx="34" cy="30" r="27"/><g fill="#8b8b90" stroke="none"><circle cx="22" cy="30" r="3"/><circle cx="34" cy="30" r="3"/><circle cx="46" cy="30" r="3"/></g>`)}`;
  }
}
customElements.define("bottom-bar", BottomBar);

class MarketApp extends View {
  styles() {
    return `
    :host { display: flex; flex-direction: column; width: 1080px; height: 1920px; overflow: hidden; background: #0d0d0d; }
    :host > * { flex: none; }
    .top { background: #1c1c1c; }
    .body { display: flex; height: 960px; overflow: hidden; margin-top: -1px; }
    `;
  }
  markup() {
    return `
    <div class="top">
      <status-bar></status-bar>
      <stock-header></stock-header>
      <quote-panel></quote-panel>
      <notice-bar></notice-bar>
      <period-tabs></period-tabs>
    </div>
    <minute-chips></minute-chips>
    <price-legend></price-legend>
    <div class="body">
      <chart-column></chart-column>
      <order-book></order-book>
    </div>
    <bottom-bar></bottom-bar>`;
  }
}
customElements.define("market-app", MarketApp);
</script>
</body>
</html>
